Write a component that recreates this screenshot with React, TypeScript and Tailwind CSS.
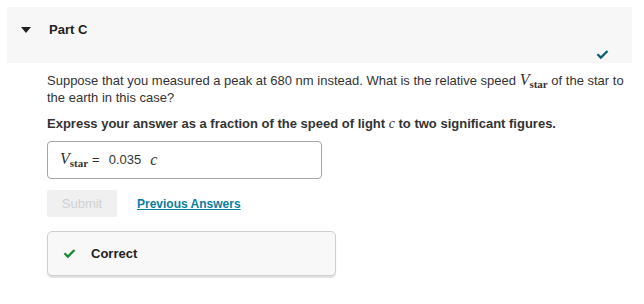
import React from 'react';

function Check({ className }: { className?: string }) {
  return (
    <svg className={className} viewBox="0 0 14 11" fill="currentColor">
      <path d="M0.6 5.6 L2.4 3.8 L5.2 6.5 L11.6 0.2 L13.4 2 L5.2 10.1 Z" />
    </svg>
  );
}

function Vstar() {
  return (
    <span className="font-['Liberation_Serif',serif] whitespace-nowrap leading-none">
      <i className="text-[16px]">V</i>
      <span className="text-[11px] font-bold align-[-3px]">star</span>
    </span>
  );
}

export default function App() {
  return (
    <div className="w-[644px] h-[304px] bg-white font-['Liberation_Sans',Arial,sans-serif] text-[#333] pt-[7px]">
      {/* Part header */}
      <div className="mx-[7px] w-[625px] h-[56px] bg-[#f7f7f7] relative">
        <div className="flex items-center h-[46px] pl-[14px]">
          <svg className="w-[10px] h-[6px] text-[#222]" viewBox="0 0 10 6" fill="currentColor">
            <path d="M0 0 H10 L5 6 Z" />
          </svg>
          <span className="ml-[18px] text-[13px] font-bold text-[#222]">Part C</span>
        </div>
        <Check className="absolute right-[23px] bottom-[3px] w-[13px] h-[10px] text-[#0e5d73]" />
      </div>

      {/* Question body */}
      <div className="pl-[47px] pr-[12px] pt-[9px]">
        <p className="text-[13px] leading-[16px] text-[#333]">
          Suppose that you measured a peak at 680 nm instead. What is the relative speed <Vstar /> of the star to the earth in this case?
        </p>
        <p className="mt-[10px] text-[13px] leading-[16px] font-bold text-[#333]">
          Express your answer as a fraction of the speed of light <i className="font-['Liberation_Serif',serif] font-normal text-[14px]">c</i> to two significant figures.
        </p>

        <div className="mt-[9px] w-[275px] h-[38px] border border-[#a6a6a6] rounded-[4px] flex items-center pl-[12px] text-[13px] text-[#333]">
          <Vstar />
          <span className="ml-[4px]">=</span>
          <span className="ml-[9px]">0.035</span>
          <i className="ml-[9px] font-['Liberation_Serif',serif] text-[16px]">c</i>
        </div>

        <div className="mt-[11px] flex items-center">
          <div className="w-[70px] h-[27px] bg-[#f0f0f0] rounded-[2px] flex items-center justify-center text-[13px] text-[#d0d0d0]">
            Submit
          </div>
          <a className="ml-[20px] text-[12px] font-bold text-[#0a7ea1] underline">Previous Answers</a>
        </div>

        <div className="mt-[14px] w-[289px] h-[45px] bg-[#f8f8f8] border border-[#cfcfcf] rounded-[5px] shadow-[0_2px_1px_rgba(0,0,0,0.12)] flex items-center pl-[15px]">
          <Check className="w-[13px] h-[10px] text-[#138a36]" />
          <span className="ml-[15px] text-[13px] font-bold text-[#222]">Correct</span>
        </div>
      </div>
    </div>
  );
}
